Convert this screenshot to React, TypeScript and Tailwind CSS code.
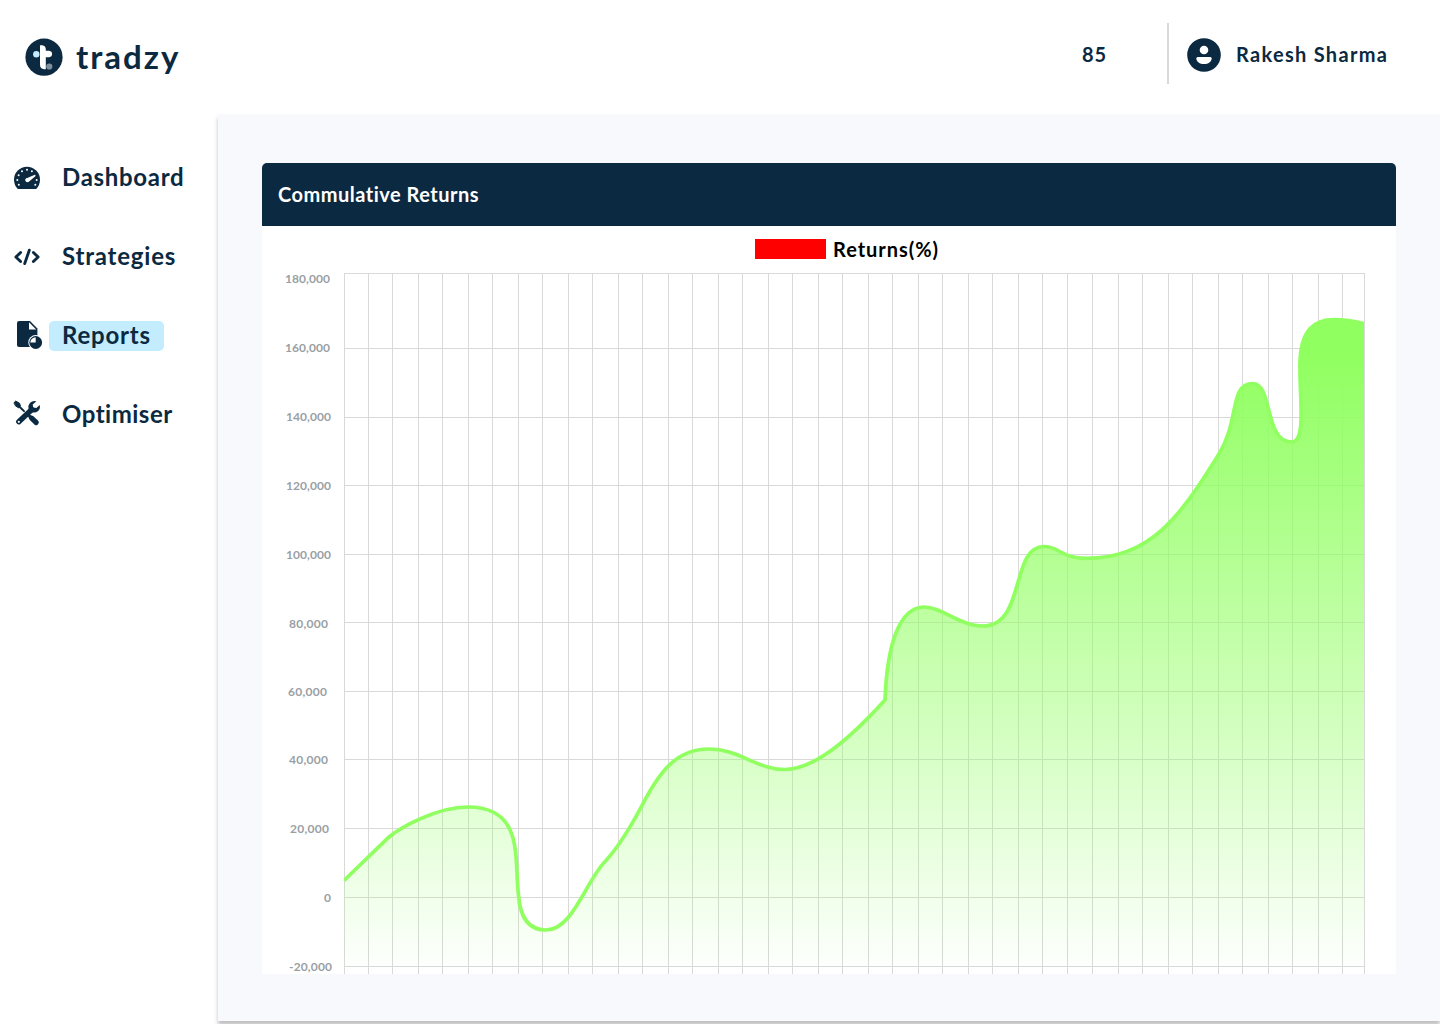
import type { ReactNode } from 'react'

// Vertical grid lines
const COLUMNS = [
  344, 368, 392, 418, 442, 468, 492, 518, 542, 568, 592, 618, 642, 668, 692,
  718, 742, 768, 792, 818, 842, 868, 892, 918, 942, 968, 992, 1018, 1042, 1067,
  1092, 1118, 1142, 1168, 1192, 1218, 1242, 1268, 1292, 1318, 1342, 1364,
]

const ROWS = [273, 348, 417, 485, 554, 622, 691, 759, 828, 897, 966]

const LABELS = [
  { text: '180,000', x: 285, y: 283, width: 45 },
  { text: '160,000', x: 285, y: 352, width: 45 },
  { text: '140,000', x: 286, y: 421, width: 45 },
  { text: '120,000', x: 286, y: 490, width: 45 },
  { text: '100,000', x: 286, y: 559, width: 45 },
  { text: '80,000', x: 289, y: 628, width: 39 },
  { text: '60,000', x: 288, y: 696, width: 39 },
  { text: '40,000', x: 289, y: 764, width: 39 },
  { text: '20,000', x: 290, y: 833, width: 39 },
  { text: '0', x: 324, y: 902, width: 7 },
  { text: '-20,000', x: 289, y: 971, width: 43 },
]

const LINE = [
  'M344 880.5L389 837',
  'C400 828 436 807 468 807',
  'C525 807 514 860 518.5 895',
  'C520 917 528 930 546 930',
  'C573 930 586 880 606 860.5',
  'C620 845 632 824.5 642.5 804.5',
  'C661 769 678 749 709 749',
  'C739 749 757 769.5 784.5 769.5',
  'C812 769.5 845 744 885 700',
  'C887 648 898 607 924.3 607',
  'C942 607 960 626 983 626',
  'C1026 626 1010 546.5 1044 546.5',
  'C1060 546.5 1060 558.3 1087 558.3',
  'C1150 558.3 1180 517 1219 454',
  'C1240 420 1229 383.5 1252.7 383.5',
  'C1273 383.5 1264 442 1291.5 442',
  'C1307 442 1299 395 1300 362',
  'C1301 330 1314 319.5 1334 319.5',
  'C1345 319.5 1356 321.5 1365 324',
].join('')

const Logo = () => (
  <div className="flex items-center">
    <svg className="size-[38px]" viewBox="0 0 38 38">
      <circle cx="19" cy="19.2" r="18.6" fill="#0b2940" />
      <path
        d="M15 7.2h2.2q3.6.5 3.6 4v1.6h3.3q3 .5 3 3.2t-3 3.2h-3.3v12h-1.6q-4.2-.3-4.2-4.4z"
        fill="#fff"
      />
      <circle cx="11.3" cy="16.2" r="3.2" fill="#c3ecff" />
      <circle cx="24.3" cy="28.5" r="3.1" fill="#7d909d" />
    </svg>
    <span className="-mt-0.5 ml-[13px] font-[Lato,sans-serif] text-[33px] leading-[38px] font-bold tracking-[2px]">
      tradzy
    </span>
  </div>
)

const DashboardIcon = () => (
  <svg className="h-[30px] w-7" viewBox="0 0 28 30">
    <path d="M4.8 26Q1 22 1 16.7a13 13 0 0 1 26 0Q27 22 23.2 26z" fill="currentColor" />
    <g fill="#fff">
      <circle cx="5.6" cy="12.2" r="1" />
      <circle cx="4.3" cy="17" r="1" />
      <circle cx="5.8" cy="21.7" r="1" />
      <circle cx="9" cy="8.3" r="1" />
      <circle cx="14" cy="6.8" r="1" />
      <circle cx="18.9" cy="8.3" r="1" />
      <circle cx="23.7" cy="17" r="1" />
      <circle cx="22.3" cy="21.7" r="1" />
      <path d="M22.3 12.1q.6.9-.2 1.5l-6 4.9a2.2 2.2 0 1 1-1.9-3.6l7.1-2.9q.7-.3 1 .1z" />
    </g>
  </svg>
)

const StrategiesIcon = () => (
  <svg
    className="h-[30px] w-7"
    viewBox="0 0 28 30"
    fill="none"
    stroke="currentColor"
    strokeWidth="2.9"
    strokeLinecap="round"
    strokeLinejoin="round"
  >
    <path d="M7.6 10.5 2.9 15l4.7 4.5M20.4 10.5l4.7 4.5-4.7 4.5M16.3 8.2l-4.6 13.4" />
  </svg>
)

const ReportIcon = () => (
  <svg className="h-[30px] w-[30px] shrink-0" viewBox="0 0 30 30" fill="currentColor">
    <path d="M6 0h11l7.4 7.4V26H6q-2-.1-2-2V2Q4.1 0 6 0z" />
    <path d="M16 1.3v7.2h7.2z" fill="#fff" />
    <circle cx="22.7" cy="21.5" r="7.4" fill="#fff" />
    <circle cx="22.7" cy="21.5" r="6.4" />
    <path d="M22.7 21.5h-5.4a5.4 5.4 0 0 1 5.4-5.2z" fill="#fff" />
  </svg>
)

const OptimiserIcon = () => (
  <svg className="h-[30px] w-7" viewBox="0 0 28 30" stroke="currentColor" strokeLinecap="round">
    <path d="M1.2 2.5 2.7 1.1 6.6 3.3 7.4 6.1 5.6 7.7 3 6.3z" fill="currentColor" strokeLinejoin="round" />
    <path d="m6 6.3 5 4.8" strokeWidth="2" />
    <path d="M18.6 18.2l4.6 4.3" strokeWidth="5.2" />
    <path d="M16.6 16.3l2.5 2.3" strokeWidth="3.2" />
    <path d="M5.8 21.7 18.8 9.5" strokeWidth="5.4" />
    <path
      d="M23.3 1.2Q19.5.3 16.9 3q-2.3 2.6-1.3 6l3.5 3.4q3.6.7 6-1.5 2.6-2.6 1.6-6l-3.3 3-3.2-.5-.5-3z"
      fill="currentColor"
      stroke="none"
    />
    <circle cx="5.8" cy="21.8" r="1.1" fill="#fff" stroke="none" />
  </svg>
)

const UserIcon = () => (
  <svg className="mt-[2px] size-[34px]" viewBox="0 0 34 34">
    <circle cx="17" cy="17" r="16.8" fill="#0b2940" />
    <circle cx="17" cy="12" r="4.3" fill="#fff" />
    <path d="M10.8 19h12.4q1.5.1 1.5 1.6c-.3 3.5-3.3 5.5-7.7 5.5s-7.4-2-7.7-5.5q0-1.5 1.5-1.6z" fill="#fff" />
  </svg>
)

type NavItemProps = {
  icon: ReactNode
  label: string
  className: string
}

const NavItem = ({ icon, label, className }: NavItemProps) => (
  <a href="#" className="flex h-[30px] items-center">
    <span className="flex w-9 shrink-0">{icon}</span>
    <span
      className={`flex h-[30px] items-center rounded-[5px] px-[13px] pb-[3px] text-2xl leading-none font-bold ${className}`}
    >
      {label}
    </span>
  </a>
)

const ReturnsChart = () => (
  <svg className="block h-[748px] w-[1134px]" viewBox="262 226 1134 748">
    <defs>
      <linearGradient id="returns" gradientUnits="userSpaceOnUse" x1="0" y1="355" x2="0" y2="976">
        <stop offset="0" stopColor="#90ff60" />
        <stop offset="1" stopColor="#90ff60" stopOpacity="0" />
      </linearGradient>
      <clipPath id="plot">
        <rect x="344" y="273" width="1020" height="701" />
      </clipPath>
    </defs>

    {/* Legend */}
    <rect x="755" y="239" width="71" height="20" fill="#f00" />
    <text x="833" y="257" textLength="105" className="fill-black font-[Lato,sans-serif] text-[20px] font-bold">
      Returns(%)
    </text>

    {LABELS.map((label) => (
      <text
        key={label.text}
        x={label.x}
        y={label.y}
        textLength={label.width}
        className="fill-[#9a9fa4] font-[Lato,sans-serif] text-[12px] font-bold"
      >
        {label.text}
      </text>
    ))}

    {/* Grid */}
    {COLUMNS.map((x) => (
      <rect key={x} x={x} y="273" width="1" height="701" fill="#d9d9d9" />
    ))}
    {ROWS.map((y) => (
      <rect key={y} x="344" y={y} width="1021" height="1" fill="#d9d9d9" />
    ))}

    <g clipPath="url(#plot)">
      <path d={`${LINE}V966H344Z`} fill="url(#returns)" />
      <path d={LINE} fill="none" stroke="#90ff60" strokeWidth="3.7" />
    </g>
  </svg>
)

const App = () => {
  return (
    <div className="flex h-[1024px] w-[1440px] flex-col overflow-hidden bg-white font-[Lato,sans-serif] text-[#0b2940]">
      <header className="flex h-[114px] shrink-0 items-start justify-between pl-[25px]">
        <div className="pt-[38px]">
          <Logo />
        </div>
        <div className="mt-[23px] flex h-[61px] items-center pr-[53px] text-[20px] font-bold">
          <span className="mr-[60px] w-[25px] tracking-[0.8px]">85</span>
          <div className="h-[61px] w-0.5 bg-[#d9d9d9]" />
          <div className="ml-[18px]">
            <UserIcon />
          </div>
          <span className="ml-[15px] w-[151px] tracking-[1.3px] whitespace-nowrap">Rakesh Sharma</span>
        </div>
      </header>

      <div className="flex">
        <nav className="flex w-[218px] shrink-0 flex-col gap-[49px] pt-[49px] pl-[13px]">
          <NavItem icon={<DashboardIcon />} label="Dashboard" className="tracking-[0.7px]" />
          <NavItem icon={<StrategiesIcon />} label="Strategies" className="tracking-[0.8px]" />
          <NavItem icon={<ReportIcon />} label="Reports" className="bg-[#c3ecff] tracking-[0.8px]" />
          <NavItem icon={<OptimiserIcon />} label="Optimiser" className="tracking-[0.5px]" />
        </nav>

        <main className="h-[907px] flex-1 bg-[#f7f9fd] px-[44px] pt-[49px] shadow-[0_4px_4px_rgba(0,0,0,0.25)]">
          <section className="w-[1134px]">
            <h2 className="flex h-[63px] items-center rounded-t-[5px] bg-[#0b2940] pb-0.5 pl-4 text-[20px] font-bold tracking-[0.5px] text-white">
              Commulative Returns
            </h2>
            <div className="bg-white">
              <ReturnsChart />
            </div>
          </section>
        </main>
      </div>
    </div>
  )
}

export default App
